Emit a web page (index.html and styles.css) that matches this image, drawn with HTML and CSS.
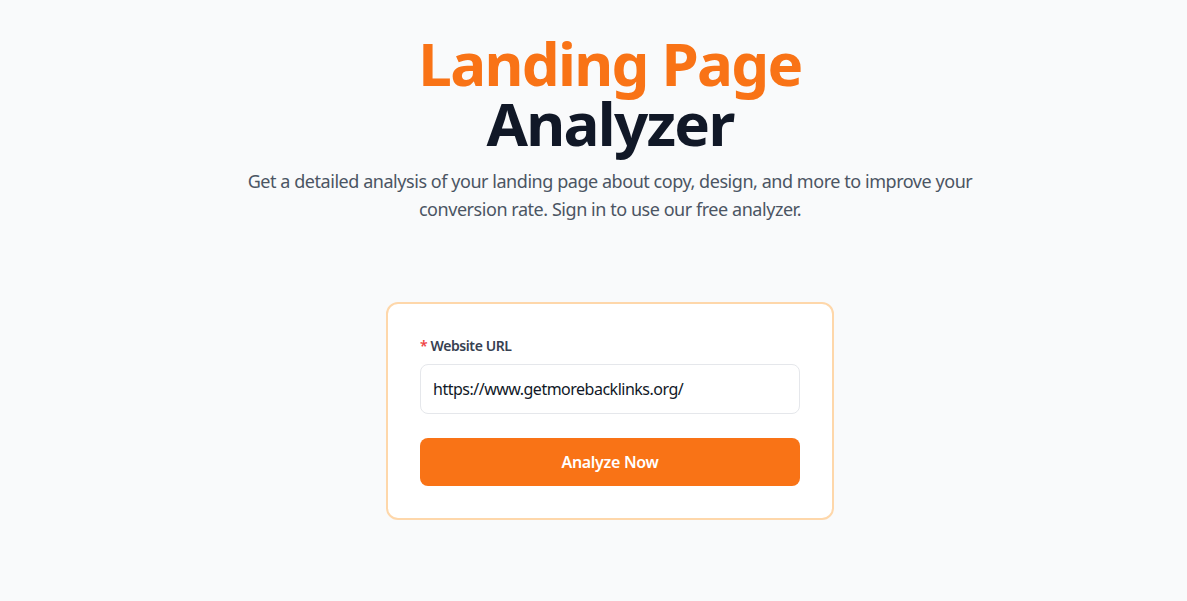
FILE: index.html
```html
<!DOCTYPE html>
<html lang="en">
<head>
<meta charset="utf-8">
<title>Landing Page Analyzer</title>
<link rel="stylesheet" href="styles.css">
</head>
<body>
<main class="page">
  <header class="hero">
    <h1 class="title"><span class="title-accent">Landing Page</span><span class="title-dark">Analyzer</span></h1>
    <p class="lead">Get a detailed analysis of your landing page about copy, design, and more to improve your conversion rate. Sign in to use our free analyzer.</p>
  </header>
  <form class="card">
    <label class="label" for="url"><span class="req">*</span> Website URL</label>
    <input class="input" id="url" type="text" value="https://www.getmorebacklinks.org/">
    <button class="btn" type="button">Analyze Now</button>
  </form>
</main>
</body>
</html>
```
FILE: styles.css
```css
* { box-sizing: border-box; }
html, body { margin: 0; padding: 0; }
body {
  background: #f9fafb;
  font-family: "Noto Sans", "Open Sans", sans-serif;
  color: #111827;
}
.page {
  display: flex;
  flex-direction: column;
  align-items: center;
  padding-top: 33px;
  padding-left: 33px;
}
.hero {
  display: flex;
  flex-direction: column;
  align-items: center;
  text-align: center;
}
.title {
  margin: 0;
  display: flex;
  flex-direction: column;
  align-items: center;
  font-size: 60px;
  line-height: 60px;
  font-weight: 700;
  letter-spacing: -1.7px;
}
.title-accent { color: #f97316; }
.title-dark { color: #111827; }
.lead {
  margin: 14px 0 0;
  max-width: 740px;
  font-size: 18px;
  line-height: 28px;
  letter-spacing: -0.45px;
  color: #4b5563;
}
.card {
  margin-top: 79px;
  width: 448px;
  background: #ffffff;
  border: 2px solid #fed7aa;
  border-radius: 12px;
  padding: 32px;
  display: flex;
  flex-direction: column;
}
.label {
  font-size: 14px;
  line-height: 20px;
  font-weight: 600;
  letter-spacing: -0.4px;
  color: #374151;
}
.req { color: #ef4444; }
.input {
  margin-top: 8px;
  height: 50px;
  border: 1px solid #e5e7eb;
  border-radius: 8px;
  padding: 12px;
  font: inherit;
  font-size: 16px;
  line-height: 24px;
  letter-spacing: -0.5px;
  color: #111827;
  background: #fff;
  outline: none;
}
.btn {
  margin-top: 24px;
  height: 48px;
  border: 0;
  border-radius: 8px;
  background: #f97316;
  color: #fff;
  font: inherit;
  font-size: 16px;
  font-weight: 600;
  letter-spacing: -0.3px;
  cursor: pointer;
}
```
